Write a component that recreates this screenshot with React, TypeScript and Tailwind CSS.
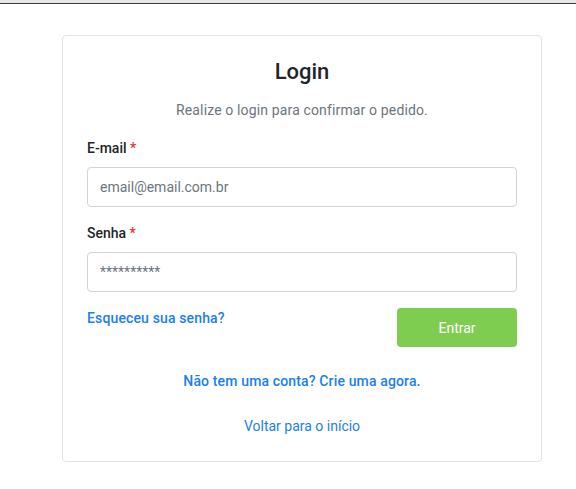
export default function App() {
  return (
    <div className="min-h-[489px] bg-white" style={{ fontFamily: "Roboto, 'Liberation Sans', sans-serif" }}>
      <div className="h-[4px] border-b border-[#3a3a3a] bg-[#e8e8e8]" />
      <div className="ml-[62px] mt-[31px] w-[480px] rounded border border-[#e3e3e3] px-6 pb-[25px] pt-[22px]">
        <h1 className="text-center text-[22px] font-medium leading-7 text-[#212529]">Login</h1>
        <p className="mt-[14px] text-center text-sm leading-5 tracking-[0.01em] text-[#6c757d]">
          Realize o login para confirmar o pedido.
        </p>

        <form className="mt-[18px]" onSubmit={(e) => e.preventDefault()}>
          <label className="block text-sm font-medium leading-5 text-[#212529]">
            E-mail <span className="text-[#e3342f]">*</span>
          </label>
          <input
            type="email"
            placeholder="email@email.com.br"
            className="mt-[9px] block h-10 w-full rounded border border-[#ced4da] px-3 text-sm text-[#495057] placeholder:text-[#6c757d] focus:outline-none"
          />

          <label className="mt-4 block text-sm font-medium leading-5 text-[#212529]">
            Senha <span className="text-[#e3342f]">*</span>
          </label>
          <input
            type="password"
            placeholder="**********"
            className="mt-[9px] block h-10 w-full rounded border border-[#ced4da] px-3 text-sm text-[#495057] placeholder:text-[#6c757d] focus:outline-none"
          />

          <div className="mt-4 flex items-start justify-between">
            <a href="#" className="text-sm font-medium leading-5 tracking-[0.01em] text-[#1a80f0]">
              Esqueceu sua senha?
            </a>
            <button
              type="submit"
              className="h-[39px] w-[120px] rounded bg-[#7ecd51] text-sm text-white"
            >
              Entrar
            </button>
          </div>
        </form>

        <div className="mt-6 text-center text-sm leading-5 tracking-[0.01em]">
          <a href="#" className="font-medium text-[#1a80f0]">
            Não tem uma conta? Crie uma agora.
          </a>
        </div>
        <div className="mt-[25px] text-center text-sm leading-5">
          <a href="#" className="text-[#1a80f0]">
            Voltar para o início
          </a>
        </div>
      </div>
    </div>
  );
}
